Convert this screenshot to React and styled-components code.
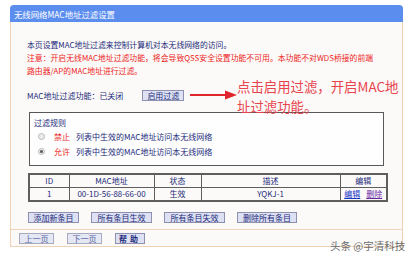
import styled, { createGlobalStyle } from "styled-components";

const GlobalStyle = createGlobalStyle`
  html, body {
    margin: 0;
    padding: 0;
    background: #ffffff;
  }
  body {
    font-family: "Noto Sans CJK SC", "Liberation Sans", sans-serif;
    font-size: 8px;
    color: #1c2a7a;
  }
`;

const Page = styled.div`
  position: relative;
  width: 415px;
  height: 259px;
  padding: 5px 0 0 10px;
  box-sizing: border-box;
  overflow: hidden;
`;

const Panel = styled.div`
  width: 393px;
  height: 242px;
  box-sizing: border-box;
  border: 1px solid #f1d2b4;
  border-top: none;
  border-radius: 4px 4px 0 0;
  background: #fbfaf8;
  display: flex;
  flex-direction: column;
`;

const Header = styled.div`
  height: 17px;
  margin: 0 -1px;
  padding-left: 4px;
  border-radius: 4px 4px 0 0;
  background: #5b8def;
  color: #ffffff;
  font-size: 8.4px;
  display: flex;
  align-items: center;
`;

const Body = styled.div`
  padding: 16px 17px 0 16px;
  display: flex;
  flex-direction: column;
`;

const Line = styled.div`
  font-size: 7.85px;
  line-height: 13px;
  white-space: nowrap;
  color: ${(p) => (p.$warn ? "#ee1c1c" : "#1c2a7a")};
`;

const StatusRow = styled.div`
  margin-top: 13px;
  height: 11px;
  display: flex;
  align-items: center;
  gap: 19px;
`;

const Button = styled.button`
  height: 11px;
  padding: 0;
  border: 1px solid #8d90ae;
  background: #dde1f3;
  color: #1c2a7a;
  font-family: inherit;
  font-size: 8px;
  line-height: 9px;
  white-space: nowrap;
  display: flex;
  align-items: center;
  justify-content: center;
  width: ${(p) => p.$w}px;
  box-sizing: border-box;
  letter-spacing: ${(p) => (p.$spaced ? "3px" : "0")};
  font-weight: ${(p) => (p.$bold ? 700 : 400)};
  opacity: ${(p) => (p.$dim ? 0.75 : 1)};
`;

const RuleBox = styled.div`
  margin: 11px 1px 0 2px;
  height: 54px;
  box-sizing: border-box;
  border: 1px solid #585858;
  background: #fefefe;
  padding: 3px 0 0 4px;
  display: flex;
  flex-direction: column;
`;

const RuleTitle = styled.div`
  line-height: 13px;
`;

const RuleRow = styled.div`
  height: 15px;
  display: flex;
  align-items: center;
  padding-left: 4px;
  white-space: nowrap;
`;

const Radio = styled.span`
  width: 7px;
  height: 7px;
  border-radius: 50%;
  border: 1px solid #b9b9b9;
  background: #ececec;
  box-sizing: border-box;
  margin-right: 9px;
  display: flex;
  align-items: center;
  justify-content: center;
  &::after {
    content: "";
    width: 3px;
    height: 3px;
    border-radius: 50%;
    background: ${(p) => (p.$on ? "#555" : "transparent")};
  }
`;

const Keyword = styled.span`
  color: #ee1c1c;
  margin-right: 6px;
`;

const Table = styled.table`
  margin: 7px 0 0 1px;
  width: 358px;
  border-collapse: collapse;
  border: 2px solid #5e5e5e;
  table-layout: fixed;
  th, td {
    border: 1px solid #5e5e5e;
    height: 12px;
    padding: 0;
    text-align: center;
    font-weight: 400;
    line-height: 12px;
    white-space: nowrap;
  }
`;

const Link = styled.span`
  text-decoration: underline;
  color: ${(p) => (p.$visited ? "#6a2aa8" : "#1636c8")};
  margin: 0 3px;
`;

const ButtonRow = styled.div`
  margin: ${(p) => p.$m};
  display: flex;
  gap: ${(p) => p.$gap}px;
`;

const Divider = styled.div`
  margin-top: 6px;
  height: 1px;
  background: #f1d2b4;
`;

const Footer = styled.div`
  padding: 3px 0 0 8px;
  display: flex;
  gap: 13px;
`;

const Note = styled.div`
  position: absolute;
  left: 237px;
  top: 77px;
  width: 180px;
  color: #e8434d;
  font-size: 13.4px;
  line-height: 19.5px;
  white-space: nowrap;
`;

const Arrow = styled.svg`
  position: absolute;
  left: 189px;
  top: 89px;
`;

const Watermark = styled.div`
  position: absolute;
  left: 330px;
  top: 238px;
  color: #6b6b6b;
  font-size: 10.5px;
  white-space: nowrap;
`;

export default function App() {
  return (
    <>
      <GlobalStyle />
      <Page>
        <Panel>
          <Header>无线网络MAC地址过滤设置</Header>
          <Body>
            <Line>本页设置MAC地址过滤来控制计算机对本无线网络的访问。</Line>
            <Line $warn>
              注意：开启无线MAC地址过滤功能，将会导致QSS安全设置功能不可用。本功能不对WDS桥接的前端
            </Line>
            <Line $warn>路由器/AP的MAC地址进行过滤。</Line>
            <StatusRow>
              <span>MAC地址过滤功能：已关闭</span>
              <Button $w={42}>启用过滤</Button>
            </StatusRow>
            <RuleBox>
              <RuleTitle>过滤规则</RuleTitle>
              <RuleRow>
                <Radio />
                <Keyword>禁止</Keyword>
                列表中生效的MAC地址访问本无线网络
              </RuleRow>
              <RuleRow>
                <Radio $on />
                <Keyword>允许</Keyword>
                列表中生效的MAC地址访问本无线网络
              </RuleRow>
            </RuleBox>
            <Table>
              <colgroup>
                <col style={{ width: 40 }} />
                <col style={{ width: 85 }} />
                <col style={{ width: 47 }} />
                <col style={{ width: 139 }} />
                <col style={{ width: 47 }} />
              </colgroup>
              <thead>
                <tr>
                  <th>ID</th>
                  <th>MAC地址</th>
                  <th>状态</th>
                  <th>描述</th>
                  <th>编辑</th>
                </tr>
              </thead>
              <tbody>
                <tr>
                  <td>1</td>
                  <td>00-1D-56-88-66-00</td>
                  <td>生效</td>
                  <td>YQKJ-1</td>
                  <td>
                    <Link>编辑</Link>
                    <Link $visited>删除</Link>
                  </td>
                </tr>
              </tbody>
            </Table>
            <ButtonRow $m="10px 0 0 1px" $gap={12}>
              <Button $w={51}>添加新条目</Button>
              <Button $w={61}>所有条目生效</Button>
              <Button $w={61}>所有条目失效</Button>
              <Button $w={60}>删除所有条目</Button>
            </ButtonRow>
          </Body>
          <Divider />
          <Footer>
            <Button $w={35} $dim>上一页</Button>
            <Button $w={35} $dim>下一页</Button>
            <Button $w={30} $bold $spaced>帮助</Button>
          </Footer>
        </Panel>
        <Arrow width="50" height="12" viewBox="0 0 50 12">
          <line x1="1" y1="6" x2="38" y2="6" stroke="#e0262c" strokeWidth="2.2" />
          <polygon points="36,1.5 48,6 36,10.5" fill="#e0262c" />
        </Arrow>
        <Note>
          点击启用过滤，开启MAC地
          <br />
          址过滤功能。
        </Note>
        <Watermark>头条 @宇清科技</Watermark>
      </Page>
    </>
  );
}
